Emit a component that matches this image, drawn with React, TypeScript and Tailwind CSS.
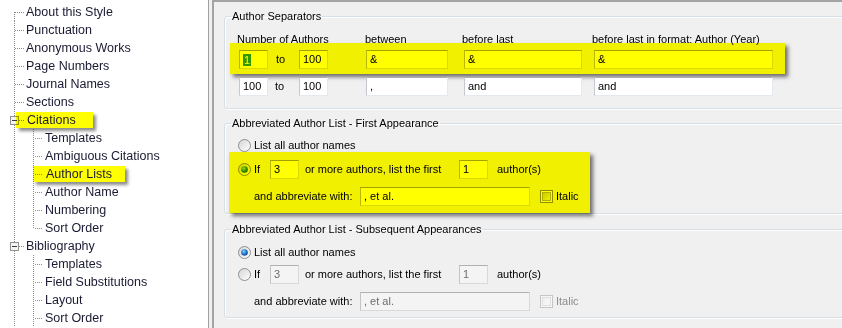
import React from 'react';

type Item = { t: string; l: 1 | 2; box?: boolean; hl?: boolean; first?: boolean; last?: boolean };

const tree: Item[] = [
  { t: 'About this Style', l: 1, first: true },
  { t: 'Punctuation', l: 1 },
  { t: 'Anonymous Works', l: 1 },
  { t: 'Page Numbers', l: 1 },
  { t: 'Journal Names', l: 1 },
  { t: 'Sections', l: 1 },
  { t: 'Citations', l: 1, box: true, hl: true },
  { t: 'Templates', l: 2 },
  { t: 'Ambiguous Citations', l: 2 },
  { t: 'Author Lists', l: 2, hl: true },
  { t: 'Author Name', l: 2 },
  { t: 'Numbering', l: 2 },
  { t: 'Sort Order', l: 2, last: true },
  { t: 'Bibliography', l: 1, box: true },
  { t: 'Templates', l: 2 },
  { t: 'Field Substitutions', l: 2 },
  { t: 'Layout', l: 2 },
  { t: 'Sort Order', l: 2 },
];

const dot = { stroke: '#8c8c8c', strokeDasharray: '1 1' };

function Lines({ item }: { item: Item }) {
  if (item.l === 1) {
    return (
      <svg width="24" height="18" className="shrink-0">
        <line x1="14.5" y1={item.first ? 9 : 0} x2="14.5" y2="18" {...dot} />
        <line x1="15" y1="9.5" x2="24" y2="9.5" {...dot} />
        {item.box && (
          <g>
            <rect x="10.5" y="5.5" width="8" height="8" fill="#f4f4f4" stroke="#929292" />
            <line x1="12" y1="9.5" x2="17" y2="9.5" stroke="#3a3a3a" />
          </g>
        )}
      </svg>
    );
  }
  return (
    <svg width="43" height="18" className="shrink-0">
      <line x1="14.5" y1="0" x2="14.5" y2="18" {...dot} />
      <line x1="33.5" y1="0" x2="33.5" y2={item.last ? 10 : 18} {...dot} />
      <line x1="35" y1="9.5" x2="43" y2="9.5" {...dot} />
    </svg>
  );
}

function Sidebar() {
  return (
    <div className="w-[209px] shrink-0 overflow-hidden border-r border-[#a0a0a0] bg-white pt-[3px] text-[12.5px] leading-[18px] text-[#1a1a33]">
      {tree.map((item, i) => (
        <div key={i} className="flex h-[18px] items-center whitespace-nowrap">
          <Lines item={item} />
          {item.hl ? (
            <span
              className={
                item.l === 1
                  ? 'ml-[-8px] flex h-[16px] items-center bg-[#ffff00] pl-[11px] pr-[17px] shadow-[3px_3px_3px_rgba(0,0,0,0.45)] mix-blend-multiply'
                  : 'ml-[-10px] flex h-[16px] items-center bg-[#ffff00] pl-[13px] pr-[13px] shadow-[3px_3px_3px_rgba(0,0,0,0.45)] mix-blend-multiply'
              }
            >
              {item.t}
            </span>
          ) : (
            <span className="ml-[2px]">{item.t}</span>
          )}
        </div>
      ))}
    </div>
  );
}

type Kind = 'n' | 'y' | 'd';

const boxStyle: Record<Kind, string> = {
  n: 'bg-white border border-[#e3e9ef] border-t-[#abadb3] border-l-[#c5c9cf] text-black',
  y: 'bg-[#ffff00] border border-[#dada00] border-t-[#a2a200] border-l-[#b8b800] text-black',
  d: 'bg-[#f4f4f4] border border-[#d9d9d9] border-t-[#adb2b5] border-l-[#c4c4c4] text-[#6d6d6d]',
};

function Field({ v, w, kind = 'n', sel }: { v: string; w: string; kind?: Kind; sel?: boolean }) {
  return (
    <div className={`${w} ${boxStyle[kind]} flex h-[19px] shrink-0 items-center pl-[3px]`}>
      {sel ? <span className="bg-[#339900] px-[1px] leading-[12px] text-[#ffff00]">{v}</span> : v}
    </div>
  );
}

function Radio({ on, kind = 'n' }: { on?: boolean; kind?: Kind }) {
  const y = kind === 'y';
  const id = `r${on ? 1 : 0}${kind}`;
  return (
    <svg width="13" height="13" className="shrink-0">
      <defs>
        <linearGradient id={`${id}f`} x1="0" y1="0" x2="1" y2="1">
          <stop offset="0" stopColor={y ? '#d0d000' : '#d4d4d4'} />
          <stop offset="1" stopColor={y ? '#ffff00' : '#ffffff'} />
        </linearGradient>
        <radialGradient id={`${id}d`} cx="0.4" cy="0.35" r="0.7">
          <stop offset="0" stopColor={y ? '#a8e000' : '#8fd0ff'} />
          <stop offset="0.5" stopColor={y ? '#3c9a00' : '#2b7fd0'} />
          <stop offset="1" stopColor={y ? '#1c5400' : '#0d3f80'} />
        </radialGradient>
      </defs>
      <circle cx="6.5" cy="6.5" r="6" fill={`url(#${id}f)`} stroke={y ? '#8a8a00' : '#8e8f8f'} />
      {on && <circle cx="6.5" cy="6.5" r="3.3" fill={`url(#${id}d)`} />}
    </svg>
  );
}

function Check({ kind = 'n' }: { kind?: Kind }) {
  const y = kind === 'y';
  const d = kind === 'd';
  const id = `c${kind}`;
  return (
    <svg width="13" height="13" className="shrink-0">
      <defs>
        <linearGradient id={id} x1="0" y1="0" x2="1" y2="1">
          <stop offset="0" stopColor={y ? '#c8c800' : d ? '#f0f0f0' : '#d0d0d0'} />
          <stop offset="1" stopColor={y ? '#f4f400' : d ? '#f8f8f8' : '#f8f8f8'} />
        </linearGradient>
      </defs>
      <rect x="0.5" y="0.5" width="12" height="12" fill={y ? '#ffff00' : d ? '#f8f8f8' : '#fff'} stroke={y ? '#8e8e00' : d ? '#c5c5c5' : '#8e8f8f'} />
      <rect x="2.5" y="2.5" width="8" height="8" fill={`url(#${id})`} stroke={y ? '#b0b000' : d ? '#dedede' : '#b8b8b8'} />
    </svg>
  );
}

function Group({ title, className, children }: { title: string; className: string; children: React.ReactNode }) {
  return (
    <fieldset
      className={`${className} w-[640px] min-w-0 rounded-[3px] border border-[#d5dfe5] shadow-[inset_1px_1px_0_#fff,1px_1px_0_#fff]`}
    >
      <legend className="ml-[6px] px-[1px] text-[11px] leading-[13px] text-black">{title}</legend>
      {children}
    </fieldset>
  );
}

function AbbrevRows({ kind }: { kind: Kind }) {
  const dis = kind === 'd';
  return (
    <>
      <div className="flex items-center">
        <Radio on={!dis} kind={kind} />
        <span className="ml-[3px] w-[16px]">If</span>
        <Field v="3" w="w-[29px]" kind={kind} />
        <span className="ml-[6px] w-[154px]">or more authors, list the first</span>
        <Field v="1" w="w-[29px]" kind={kind} />
        <span className="ml-[9px]">author(s)</span>
      </div>
      <div className="mt-[8px] flex items-center pl-[16px]">
        <span className="w-[106px]">and abbreviate with:</span>
        <Field v=", et al." w="w-[170px]" kind={kind} />
        <span className="ml-[10px]">
          <Check kind={kind} />
        </span>
        <span className={`ml-[3px] ${dis ? 'text-[#8d8d8d]' : ''}`}>Italic</span>
      </div>
    </>
  );
}

function Main() {
  return (
    <div className="min-w-0 flex-1 overflow-hidden border-l-2 border-t-2 border-[#a4a4a4] bg-[#f0f0f0] pl-[10px] text-[11px] leading-[13px] text-black">
      <Group title="Author Separators" className="mt-[8px] pb-[12px]">
        <div className="mt-[10px] flex h-[13px] whitespace-nowrap pl-[12px]">
          <span className="w-[128px]">Number of Authors</span>
          <span className="w-[97px]">between</span>
          <span className="w-[130px]">before last</span>
          <span>before last in format: Author (Year)</span>
        </div>
        <div className="ml-[5px] mt-[-3px] flex w-fit items-center bg-[#f0f000] pb-[5px] pl-[9px] pr-[12px] pt-[7px] shadow-[3px_3px_4px_rgba(0,0,0,0.55)]">
          <Field v="1" w="w-[29px]" kind="y" sel />
          <span className="w-[31px] pl-[8px]">to</span>
          <Field v="100" w="w-[29px]" kind="y" />
          <span className="w-[38px]" />
          <Field v="&amp;" w="w-[82px]" kind="y" />
          <span className="w-[16px]" />
          <Field v="&amp;" w="w-[118px]" kind="y" />
          <span className="w-[12px]" />
          <Field v="&amp;" w="w-[179px]" kind="y" />
        </div>
        <div className="mt-[3px] flex items-center pl-[14px]">
          <Field v="100" w="w-[29px]" />
          <span className="w-[31px] pl-[7px]">to</span>
          <Field v="100" w="w-[29px]" />
          <span className="w-[38px]" />
          <Field v="," w="w-[82px]" />
          <span className="w-[16px]" />
          <Field v="and" w="w-[118px]" />
          <span className="w-[12px]" />
          <Field v="and" w="w-[179px]" />
        </div>
      </Group>

      <Group title="Abbreviated Author List - First Appearance" className="mt-[8px] pb-0">
        <div className="mt-[7px] flex h-[16px] items-center pl-[13px]">
          <Radio />
          <span className="ml-[3px]">List all author names</span>
        </div>
        <div className="ml-[4px] mt-[-1px] w-[361px] bg-[#f0f000] pb-[7px] pl-[9px] pt-[8px] shadow-[3px_3px_4px_rgba(0,0,0,0.55)]">
          <AbbrevRows kind="y" />
        </div>
      </Group>

      <Group title="Abbreviated Author List - Subsequent Appearances" className="mt-[9px] pb-[6px]">
        <div className="mt-[8px] flex h-[16px] items-center pl-[13px]">
          <Radio on />
          <span className="ml-[3px]">List all author names</span>
        </div>
        <div className="mt-[5px] pl-[13px]">
          <AbbrevRows kind="d" />
        </div>
      </Group>
    </div>
  );
}

export default function App() {
  return (
    <div className="flex h-[328px] w-[842px] overflow-hidden bg-[#f0f0f0] font-['Liberation_Sans',Arial,sans-serif]">
      <Sidebar />
      <div className="w-[3px] shrink-0" />
      <Main />
    </div>
  );
}
